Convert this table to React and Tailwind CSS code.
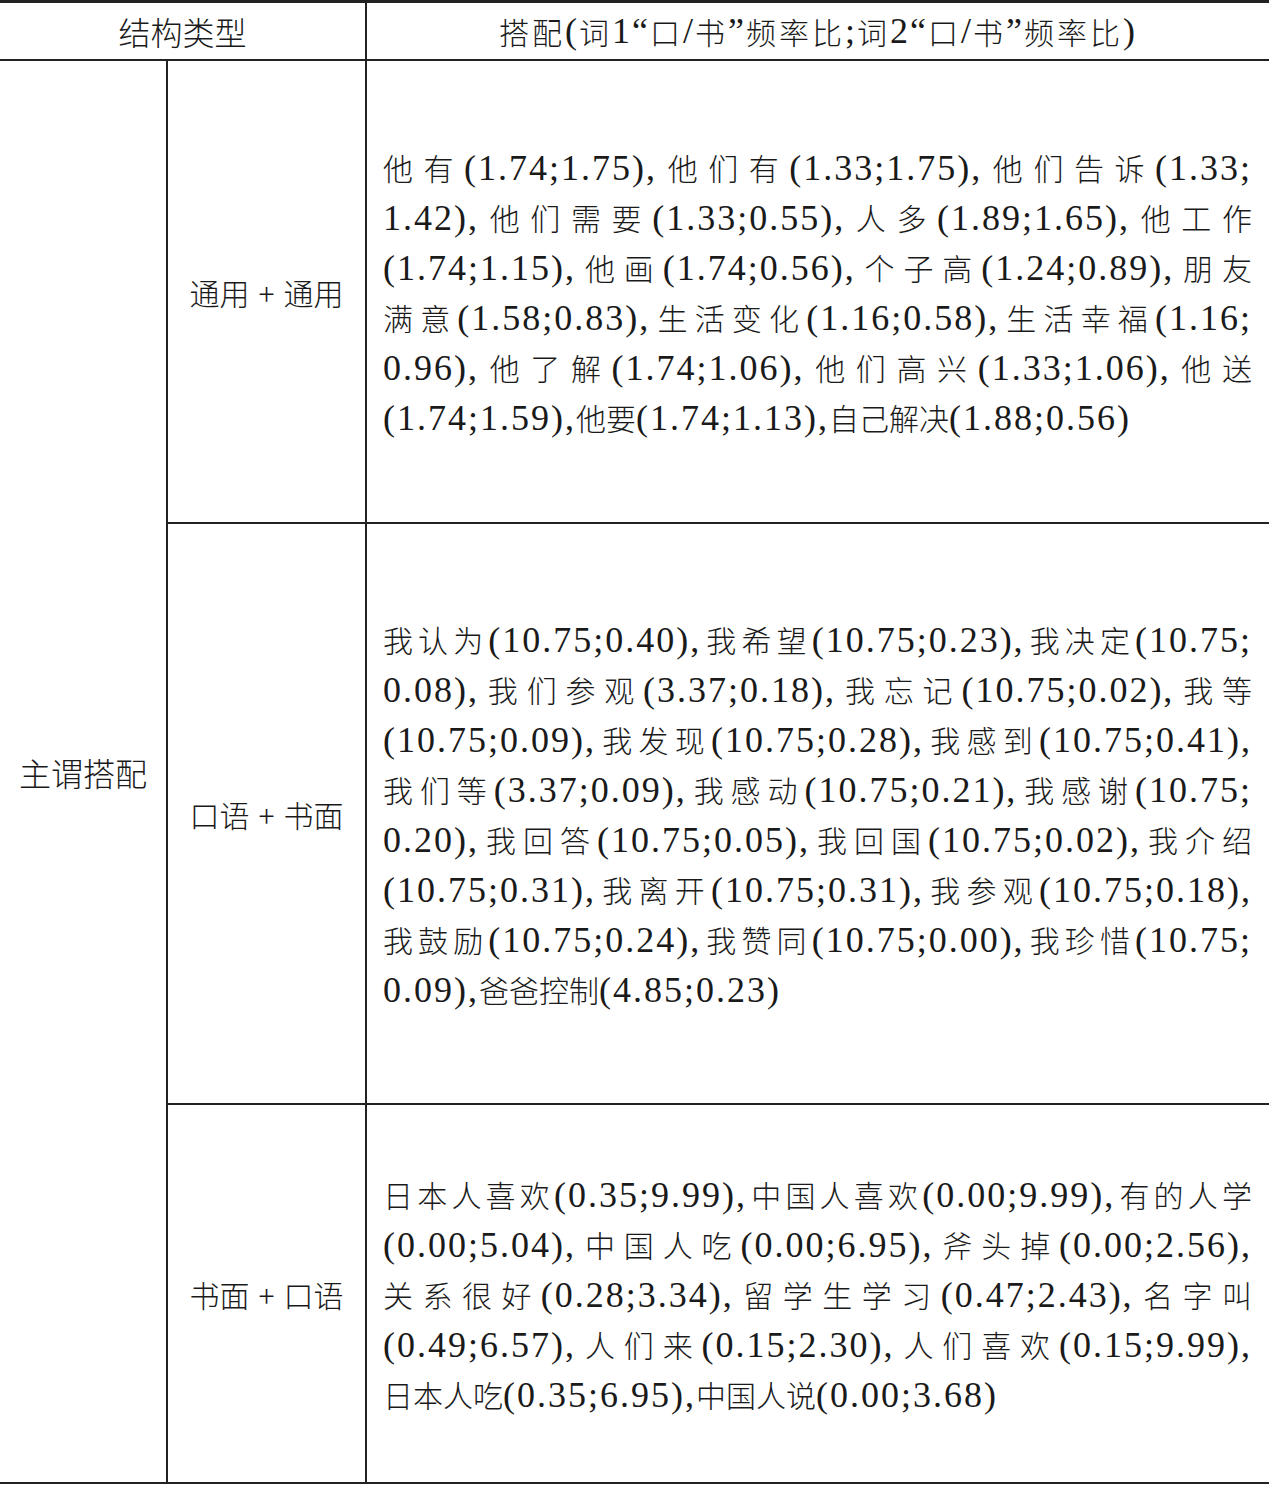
import React from "react";

function Mixed({ text, big }) {
  const parts = text.split(/([\u4e00-\u9fff\u3000-\u303f]+)/);
  return (
    <>
      {parts.map((p, i) =>
        i % 2 === 1 ? (
          <span
            key={i}
            className={
              big
                ? "text-[32px] font-['Noto_Sans_CJK_SC',sans-serif] font-light"
                : "text-[30px] font-['Noto_Sans_CJK_SC',sans-serif] font-light"
            }
          >
            {p}
          </span>
        ) : (
          <span key={i} className="text-[36px] tracking-[2px]">
            {p}
          </span>
        )
      )}
    </>
  );
}

function Para({ lines }) {
  return (
    <div className="w-full">
      {lines.map((l, i) => (
        <div
          key={i}
          className={
            i === lines.length - 1
              ? "h-[50px] leading-[50px] text-left overflow-visible whitespace-nowrap"
              : "h-[50px] leading-[50px] text-justify [text-align-last:justify] overflow-visible"
          }
        >
          <Mixed text={l} />
        </div>
      ))}
    </div>
  );
}

const row1 = [
  "他有(1.74;1.75),他们有(1.33;1.75),他们告诉(1.33;",
  "1.42),他们需要(1.33;0.55),人多(1.89;1.65),他工作",
  "(1.74;1.15),他画(1.74;0.56),个子高(1.24;0.89),朋友",
  "满意(1.58;0.83),生活变化(1.16;0.58),生活幸福(1.16;",
  "0.96),他了解(1.74;1.06),他们高兴(1.33;1.06),他送",
  "(1.74;1.59),他要(1.74;1.13),自己解决(1.88;0.56)",
];

const row2 = [
  "我认为(10.75;0.40),我希望(10.75;0.23),我决定(10.75;",
  "0.08),我们参观(3.37;0.18),我忘记(10.75;0.02),我等",
  "(10.75;0.09),我发现(10.75;0.28),我感到(10.75;0.41),",
  "我们等(3.37;0.09),我感动(10.75;0.21),我感谢(10.75;",
  "0.20),我回答(10.75;0.05),我回国(10.75;0.02),我介绍",
  "(10.75;0.31),我离开(10.75;0.31),我参观(10.75;0.18),",
  "我鼓励(10.75;0.24),我赞同(10.75;0.00),我珍惜(10.75;",
  "0.09),爸爸控制(4.85;0.23)",
];

const row3 = [
  "日本人喜欢(0.35;9.99),中国人喜欢(0.00;9.99),有的人学",
  "(0.00;5.04),中国人吃(0.00;6.95),斧头掉(0.00;2.56),",
  "关系很好(0.28;3.34),留学生学习(0.47;2.43),名字叫",
  "(0.49;6.57),人们来(0.15;2.30),人们喜欢(0.15;9.99),",
  "日本人吃(0.35;6.95),中国人说(0.00;3.68)",
];

function Label({ a, b }) {
  return (
    <>
      <Mixed text={a} />
      <span className="text-[30px] font-['Noto_Sans_CJK_SC',sans-serif] font-light px-[9px]">+</span>
      <Mixed text={b} />
    </>
  );
}

export default function App() {
  return (
    <div className="w-[1269px] h-[1487px] bg-white text-[#1a1a1a] font-['Liberation_Serif','Noto_Sans_CJK_SC',serif]">
      <div className="border-t-[3px] border-b-2 border-[#222]">
        <div className="flex h-[58px] border-b-2 border-[#222]">
          <div className="w-[367px] shrink-0 border-r-2 border-[#222] flex items-center justify-center leading-[50px]">
            <Mixed text="结构类型" big />
          </div>
          <div className="flex-1 flex items-center justify-center leading-[50px] tracking-[3px]">
            <Mixed text="搭配( 词1“口/书”频率比;词2“口/书”频率比)" />
          </div>
        </div>
        <div className="grid grid-cols-[168px_199px_1fr] grid-rows-[463px_581px_377px]">
          <div className="row-span-3 border-r-2 border-[#222] flex items-center justify-center leading-[50px]">
            <Mixed text="主谓搭配" big />
          </div>

          <div className="border-r-2 border-b-2 border-[#222] flex items-center justify-center leading-[50px]">
            <Label a="通用" b="通用" />
          </div>
          <div className="border-b-2 border-[#222] flex items-center pl-[16px] pr-[17px]">
            <Para lines={row1} />
          </div>

          <div className="border-r-2 border-b-2 border-[#222] flex items-center justify-center leading-[50px]">
            <Label a="口语" b="书面" />
          </div>
          <div className="border-b-2 border-[#222] flex items-center pl-[16px] pr-[17px]">
            <Para lines={row2} />
          </div>

          <div className="border-r-2 border-[#222] flex items-center justify-center leading-[50px]">
            <Label a="书面" b="口语" />
          </div>
          <div className="flex items-center pl-[16px] pr-[17px]">
            <Para lines={row3} />
          </div>
        </div>
      </div>
    </div>
  );
}
